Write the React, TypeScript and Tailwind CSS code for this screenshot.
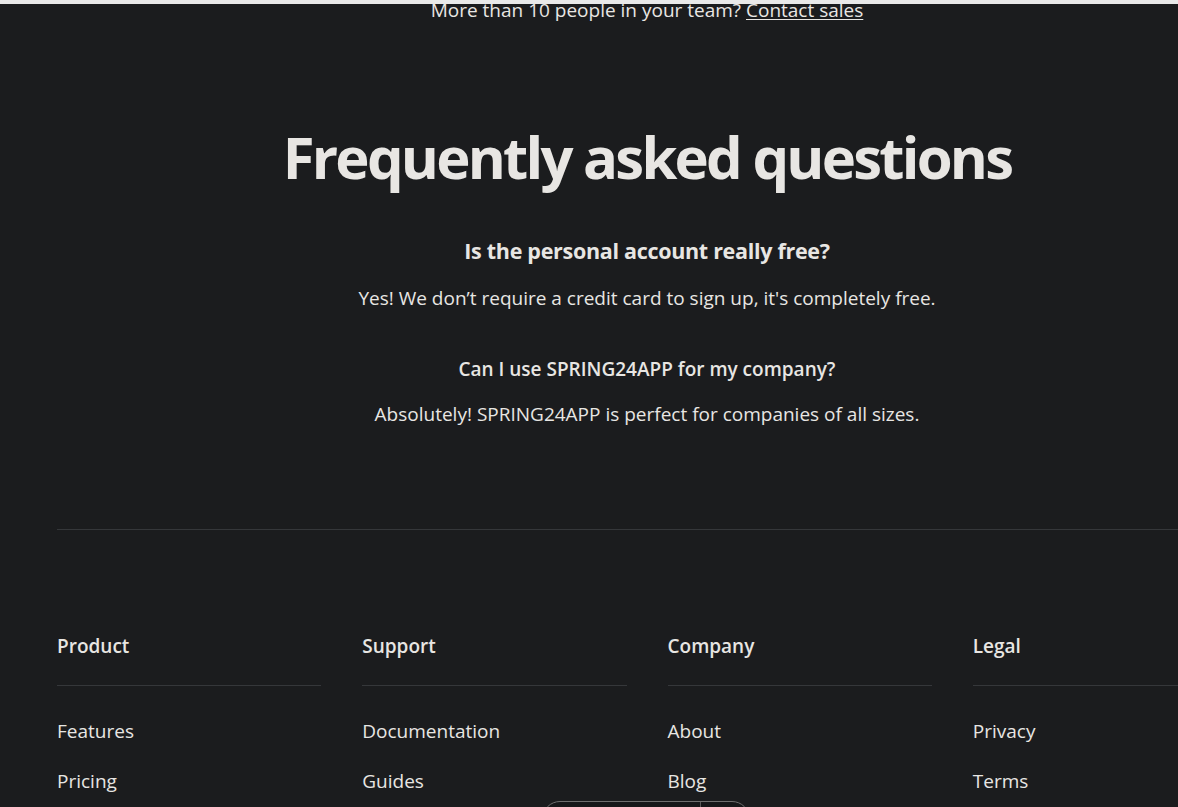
import React from "react";

const cols = [
  { title: "Product", links: ["Features", "Pricing"] },
  { title: "Support", links: ["Documentation", "Guides"] },
  { title: "Company", links: ["About", "Blog"] },
  { title: "Legal", links: ["Privacy", "Terms"] },
];

export default function App() {
  return (
    <div
      className="relative h-[807px] overflow-hidden bg-[#1b1c1e] text-[#e8e6e3]"
      style={{ fontFamily: '"Open Sans", "Noto Sans", sans-serif' }}
    >
      <div className="relative z-10 h-[4px] bg-[#e9e9e9]" />
      <div className="ml-[57px] w-[1180px]">
        <p className="-mt-[6px] text-center text-[19px] leading-[24px]">
          More than 10 people in your team?{" "}
          <a className="underline underline-offset-2">Contact sales</a>
        </p>
        <h2 className="mt-[99px] text-center text-[58px] font-bold leading-[72px] tracking-[-2.75px]">
          Frequently asked questions
        </h2>
        <div className="mt-[44px] flex flex-col items-center">
          <h3 className="text-[21.5px] font-bold leading-[28px] tracking-[-0.3px]">
            Is the personal account really free?
          </h3>
          <p className="mt-[21px] text-[19px] leading-[24px]">
            Yes! We don’t require a credit card to sign up, it's completely free.
          </p>
          <h3 className="mt-[47px] text-[19px] font-semibold leading-[24px]">
            Can I use SPRING24APP for my company?
          </h3>
          <p className="mt-[21px] text-[19px] leading-[24px]">
            Absolutely! SPRING24APP is perfect for companies of all sizes.
          </p>
        </div>
        <div className="mt-[103px] h-px bg-[#35373a]" />
        <div className="mt-[104px] grid grid-cols-4 gap-x-[41px]">
          {cols.map((c) => (
            <div key={c.title}>
              <h4 className="text-[19px] font-semibold leading-[24px]">
                {c.title}
              </h4>
              <div className="mt-[27px] h-px bg-[#35373a]" />
              <ul className="mt-[33px] flex flex-col gap-[26px]">
                {c.links.map((l) => (
                  <li key={l} className="text-[19px] leading-[24px]">
                    {l}
                  </li>
                ))}
              </ul>
            </div>
          ))}
        </div>
      </div>
      <div className="absolute left-[542px] top-[801px] flex h-[30px] w-[208px] rounded-t-[18px] border border-[#6e6e6e] bg-[#161719]">
        <div className="w-[158px] border-r border-[#5a5a5a]" />
      </div>
    </div>
  );
}
